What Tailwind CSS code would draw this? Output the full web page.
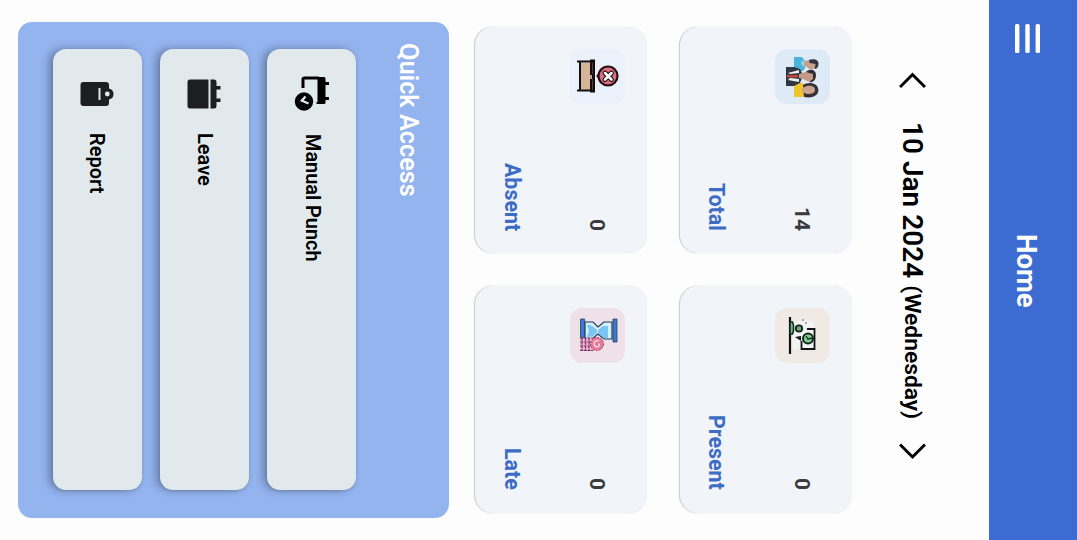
<!DOCTYPE html>
<html lang="en">
<head>
<meta charset="utf-8">
<title>Home</title>
<script src="https://cdn.jsdelivr.net/npm/@tailwindcss/browser@4"></script>
</head>
<body class="bg-[#fdfdfe] overflow-hidden">
<div class="flex flex-row-reverse w-[1077px] h-[540px] bg-[#fdfdfe] font-[Roboto,sans-serif] font-semibold text-black whitespace-nowrap">

  <header class="w-[88px] h-full shrink-0 bg-[#3c6cd1] flex flex-col items-center pt-6 pr-3">
    <svg class="shrink-0" width="26" height="29" viewBox="0 0 26 29" fill="#fff"><rect x="1" width="4.4" height="29" rx="1.5"/><rect x="11.3" width="4.4" height="29" rx="1.5"/><rect x="21.6" width="4.4" height="29" rx="1.5"/></svg>
    <h1 class="[writing-mode:vertical-rl] w-8 leading-8 mt-[181px] mr-[2px] text-[27.5px] font-bold text-white">Home</h1>
  </header>

  <nav class="w-[137px] h-full shrink-0 flex flex-col items-center pr-[17px] pt-[72px]">
    <svg class="shrink-0" width="27" height="17" viewBox="0 0 27 17" fill="none" stroke="#000" stroke-width="3"><path d="M1 15 13.500 2.500 26 15"/></svg>
    <div class="[writing-mode:vertical-rl] w-8 leading-8 h-[322px] pt-[33px] text-[28px]"><span>10 Jan 2024</span> <span class="text-[22.8px]">(Wednesday)</span></div>
    <svg class="shrink-0 mt-[31px]" width="27" height="18" viewBox="0 0 27 18" fill="none" stroke="#000" stroke-width="3"><path d="M1 2.500 13.500 15 26 2.500"/></svg>
  </nav>

  <main class="flex flex-row-reverse">
    <section class="flex flex-row-reverse gap-[33px] pt-[27px]">
      <div class="flex flex-col gap-[33px]">
        <article class="w-[172px] h-[226px] rounded-[18px] bg-[#f1f4f9] shadow-[-1px_0_1px_rgba(0,0,0,0.2),0_0_2px_rgba(0,0,0,0.06)] flex flex-row-reverse pr-[22px] py-[22px]">
          <div class="w-[55px] flex flex-col items-center justify-between">
            <svg width="55" height="55" viewBox="0 0 55 55"><rect width="55" height="55" rx="12" fill="#dfeaf7"/>
              <path d="M19 8h8l3 4v7l-2 3h-9z" fill="#49b4d8"/><path d="M27 11l3 2-1 5-3-3z" fill="#8ed8ee"/><path d="M29 13c4-3 9-3 12 0l-1 6c-3 2-6 2-8-1l-3-1z" fill="#c9a08b"/><path d="M34 11c5-2 10 0 9.500 4 0 3-2 5-4 5l1-5-6-1z" fill="#34363d"/>
              <path d="M19 34h9l3 4v7l-3 3h-9z" fill="#efc52d"/><path d="M28 36c4-3 13-3 15 3s-4 11-14 9z" fill="#363137"/><path d="M27 39l5-2c5-1 8 1 8 4s-3 4-8 4l-5-2z" fill="#cba38d"/>
              <path d="M11 18h8l6 2 2 4v5l-2 5-6 3h-8z" fill="#2e3845"/><path d="M13 24l11-3v3l-9 1zM13 31l11 2v-3l-9-1z" fill="#f2f1ef"/><path d="M12 26h11v2.500H12z" fill="#c6463b"/><path d="M24 25l4-1c4-3 10-2 11 2s-2 7-7 6l-4-2-4-1z" fill="#c49a84"/><path d="M31 23c4-4 10-2 10 3 0 5-3 8-7 7l4-3v-5z" fill="#2e2e34"/></svg>
            <span class="[writing-mode:vertical-rl] w-6 leading-6 mr-[2px] text-[21px] font-bold text-[#3b3b3f]">14</span>
          </div>
          <h2 class="[writing-mode:vertical-rl] w-6 leading-6 mr-[47px] text-right text-[21.4px] font-bold text-[#3c6cc4]">Total</h2>
        </article>
        <article class="w-[172px] h-[227px] rounded-[18px] bg-[#f1f4f9] shadow-[-1px_0_1px_rgba(0,0,0,0.2),0_0_2px_rgba(0,0,0,0.06)] flex flex-row-reverse pr-[22px] pt-[22px] pb-[23px]">
          <div class="w-[55px] flex flex-col items-center justify-between">
            <svg width="55" height="55" viewBox="0 0 55 55"><rect width="55" height="55" rx="12" fill="#f1eae4"/>
              <path d="M16 13h23v28H18z" fill="#f2f3f2"/><path d="M15 9v37" stroke="#0a1012" stroke-width="2.2"/><path d="M15 14h2.500l1 3v6l-1 3H15z" fill="#77b886" stroke="#10251a" stroke-width="1.5"/><circle cx="24" cy="20.500" r="3.200" fill="#70a982" stroke="#11271b" stroke-width="1.8"/><path d="M32 21h7.500v20h-13V33" fill="none" stroke="#101515" stroke-width="1.8"/><path d="M20 29l6-1v5z" fill="#101515"/><circle cx="33" cy="30.500" r="5" fill="#82cc93" stroke="#15281d" stroke-width="2"/><path d="M31 28l2 3 5-1" fill="none" stroke="#15281d" stroke-width="1.3"/><path d="M27 12h2m1 3h2" stroke="#a8acb7" stroke-width="2"/></svg>
            <span class="[writing-mode:vertical-rl] w-6 leading-6 mr-[2px] text-[21px] font-bold text-[#3b3b3f]">0</span>
          </div>
          <h2 class="[writing-mode:vertical-rl] w-6 leading-6 mr-[47px] text-right text-[21.4px] font-bold text-[#3c6cc4]">Present</h2>
        </article>
      </div>
      <div class="flex flex-col gap-[33px]">
        <article class="w-[172px] h-[226px] rounded-[18px] bg-[#f1f4f9] shadow-[-1px_0_1px_rgba(0,0,0,0.2),0_0_2px_rgba(0,0,0,0.06)] flex flex-row-reverse pr-[22px] py-[22px]">
          <div class="w-[55px] flex flex-col items-center justify-between">
            <svg width="55" height="55" viewBox="0 0 55 55"><rect width="55" height="55" rx="12" fill="#eaf1fa"/>
              <path d="M10 14h11v28H10z" fill="#d7b49c"/><path d="M7 12.500h14M7 41.500h14M10 13v29" fill="none" stroke="#15110f" stroke-width="2"/><path d="M20 10.500h5v33h-5z" fill="#120e0e"/><path d="M22.500 14v11m0 5v11" stroke="#5c4038" stroke-width="1"/><path d="M21 26v4" stroke="#cba283" stroke-width="2"/><path d="M26 27l6-5.500v11z" fill="#321319"/><circle cx="38" cy="27" r="9.500" fill="#dd6c80" stroke="#241014" stroke-width="2.200"/><path d="M35 24l6.500 6.500m0-6.500l-6.500 6.500" stroke="#231417" stroke-width="4.800" stroke-linecap="round"/><path d="M35 24l6.500 6.500m0-6.500l-6.500 6.500" stroke="#fff" stroke-width="2.500" stroke-linecap="round"/></svg>
            <span class="[writing-mode:vertical-rl] w-6 leading-6 mr-[2px] text-[21px] font-bold text-[#3b3b3f]">0</span>
          </div>
          <h2 class="[writing-mode:vertical-rl] w-6 leading-6 mr-[46px] text-right text-[21.4px] font-bold text-[#3c6cc4]">Absent</h2>
        </article>
        <article class="w-[172px] h-[227px] rounded-[18px] bg-[#f1f4f9] shadow-[-1px_0_1px_rgba(0,0,0,0.2),0_0_2px_rgba(0,0,0,0.06)] flex flex-row-reverse pr-[22px] pt-[22px] pb-[23px]">
          <div class="w-[55px] flex flex-col items-center justify-between">
            <svg width="55" height="55" viewBox="0 0 55 55"><rect width="55" height="55" rx="12" fill="#eee1e7"/>
              <path d="M15 14h8l5 5 6-5h8v17h-8l-6-5-6 5h-7z" fill="#d3f1fb" stroke="#263657" stroke-width="1.200"/><path d="M17 17c5 0 7 2 10 5v3c-3 3-6 4-10 4l2-6zM38 18h-5l-5 4v3l6 5h4z" fill="#7cc4f1"/><path d="M10.500 11h4v19h-4zM43 11h4v23h-4z" fill="#3b7acc" stroke="#24426f" stroke-width=".8"/><path d="M10 30h14v13H10z" fill="#eab9cf"/><path d="M10 30h14M10 34h13M10 38h13M10 42.500h13M12 30v13M15.500 30v13M19 30v13" stroke="#7e2e67" stroke-width="1.100" stroke-dasharray="3 .7"/><circle cx="27" cy="36" r="6.500" fill="#e7799a" stroke="#a14468" stroke-width="1" stroke-dasharray="2 1"/><path d="M29 33c-5-2-7 5-2 6 3 0 3-3 1-3" fill="none" stroke="#fbd7e1" stroke-width="1.400"/></svg>
            <span class="[writing-mode:vertical-rl] w-6 leading-6 mr-[2px] text-[21px] font-bold text-[#3b3b3f]">0</span>
          </div>
          <h2 class="[writing-mode:vertical-rl] w-6 leading-6 mr-[46px] text-right text-[21.4px] font-bold text-[#3c6cc4]">Late</h2>
        </article>
      </div>
    </section>

    <section class="mt-[22px] mr-[26px] w-[431px] h-[496px] rounded-[14px] bg-[#94b4ef] flex flex-row-reverse pr-[25px]">
      <h2 class="[writing-mode:vertical-rl] w-8 leading-8 mt-[21px] text-[25.3px] font-semibold text-white">Quick Access</h2>
      <div class="flex flex-row-reverse gap-[18px] mt-[27px] mr-[36px]">
        <button class="w-[89px] h-[441px] rounded-[13px] bg-[#e1e9ec] shadow-[-4px_0_8px_rgba(0,0,0,0.3),0_1px_3px_rgba(0,0,0,0.12)] flex flex-col items-center pt-[26px]">
          <svg class="shrink-0" width="36" height="38" viewBox="0 0 36 38"><path d="M9 13V4.500Q9 3 10.500 3H25" fill="none" stroke="#000" stroke-width="3"/><path d="M23.500 2H30q1.500 0 1.500 1.500V7H35v3h-3.500v12H35v3h-3.500v2.500Q31.500 29 30 29h-7.500v-2h1z"/><circle cx="10" cy="26.500" r="9.200"/><path d="M14.500 28.500L7.500 25.500M7 26.500L11.500 21.500" fill="none" stroke="#e1e9ec" stroke-width="2.400"/></svg>
          <span class="[writing-mode:vertical-rl] w-6 leading-6 mt-[21px] text-[19.9px]">Manual Punch</span>
        </button>
        <button class="w-[89px] h-[441px] rounded-[13px] bg-[#e1e9ec] shadow-[-4px_0_8px_rgba(0,0,0,0.3),0_1px_3px_rgba(0,0,0,0.12)] flex flex-col items-center pt-[29px]">
          <svg class="shrink-0 mr-[1px]" width="34" height="32" viewBox="0 0 34 32" fill="#1c1e20"><path d="M3 1.500H21.500V30.500H3Q.5 30.500.5 28V4Q.5 1.500 3 1.500z"/><path d="M23.500 1.500H27q2.500 0 2.500 2.500v4H33.500v3.500H29.500v9H33.500V24H29.500v4q0 2.500-2.500 2.500h-3.500z"/></svg>
          <span class="[writing-mode:vertical-rl] w-6 leading-6 mt-[23px] text-[20px]">Leave</span>
        </button>
        <button class="w-[89px] h-[441px] rounded-[13px] bg-[#e1e9ec] shadow-[-4px_0_8px_rgba(0,0,0,0.3),0_1px_3px_rgba(0,0,0,0.12)] flex flex-col items-center pt-[32px] pr-[1px]">
          <svg class="shrink-0" width="34" height="26" viewBox="0 0 34 26"><path d="M3.500 1H26q3 0 3 3v3.500q4.500 1 4.500 5.500T29 18.500V22q0 3-3 3H3.500q-3 0-3-3V4q0-3 3-3z" fill="#1c1e20"/><path d="M19.500 7v12" stroke="#e1e9ec" stroke-width="2"/><circle cx="27.300" cy="13" r="2.400" fill="#e1e9ec"/></svg>
          <span class="[writing-mode:vertical-rl] w-6 leading-6 mt-[26px] text-[20px]">Report</span>
        </button>
      </div>
    </section>
  </main>
</div>
</body>
</html>
